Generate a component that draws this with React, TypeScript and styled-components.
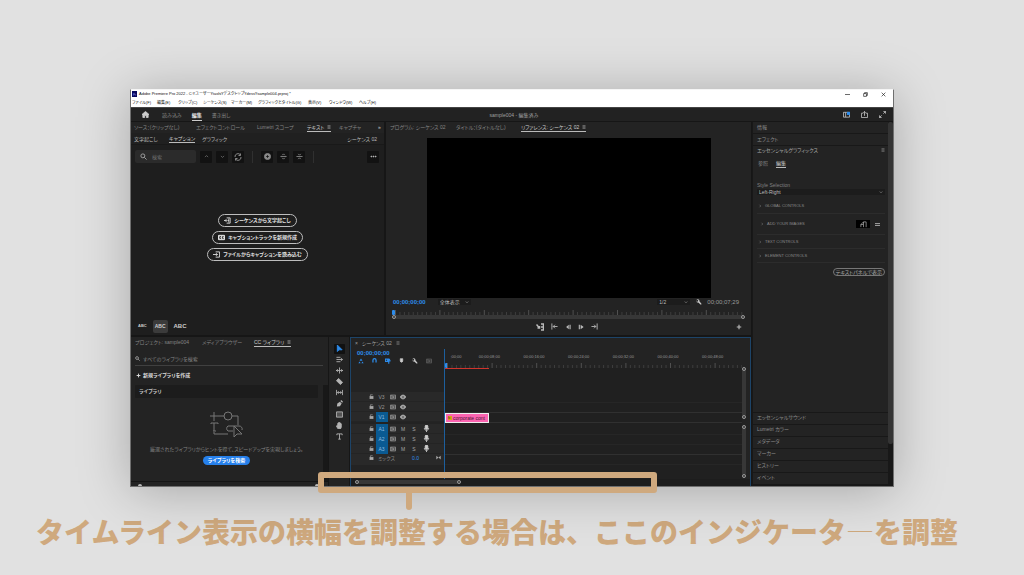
import React from "react";
import styled, { createGlobalStyle, css } from "styled-components";

const GlobalStyle = createGlobalStyle`
  *, *::before, *::after { box-sizing: border-box; }
  body { margin: 0; background: #e1e1e1; }
  button, input, select { font: inherit; color: inherit; margin: 0; padding: 0; border: 0; background: none; }
  button { white-space: nowrap; text-align: left; cursor: pointer; }
`;

const BLUE = "#2d8ceb";
const TAN = "#cfa97e";

const Page = styled.main`
  padding: 89px 130px 0;
  min-height: 100vh;
  overflow: hidden;
  background: #e1e1e1;
  font-family: "Liberation Sans", "Noto Sans CJK JP", sans-serif;
`;

const Stage = styled.div`
  position: relative;
`;

const AppWindow = styled.div`
  overflow: hidden;
  background: #161616;
  border: 1px solid #6f6f6f;
  border-top-color: #f5f5f5;
  color: #a0a0a0;
  font-size: 5px;
  line-height: 8px;
  font-feature-settings: "palt";
  white-space: nowrap;
  box-shadow: 0 4px 48px rgba(0, 0, 0, 0.26);
`;

const Row = styled.div<{ $gap?: number }>`
  display: flex;
  align-items: center;
  gap: ${(p) => p.$gap ?? 0}px;
`;

const Spacer = styled.div`
  flex: 1;
`;

/* ---------- icons ---------- */

const glyphs: Record<string, React.ReactNode> = {
  home: <path d="M8 1 0 8h2v7h4v-5h4v5h4V8h2z" fill="currentColor" />,
  search: <path d="M6.500 2a4.500 4.500 0 1 0 0 9 4.500 4.500 0 0 0 0-9zM10 10l5 5" />,
  up: <path d="m3 10 5-5 5 5" />,
  down: <path d="m3 6 5 5 5-5" />,
  right: <path d="m6 3 5 5-5 5" />,
  refresh: <path d="M2 8a6 6 0 0 1 11-4M14 8a6 6 0 0 1-11 4M13 1v4H9M3 15v-4h4" />,
  plusCircle: <><circle cx="8" cy="8" r="7" fill="currentColor" /><path d="M8 5v6M5 8h6" stroke="#141414" /></>,
  split: <path d="M1 8h14M5 5l3-3 3 3M5 11l3 3 3-3" />,
  merge: <path d="M1 8h14M5 2l3 3 3-3M5 14l3-3 3 3" />,
  dots: <><circle cx="3" cy="8" r="1" fill="currentColor" /><circle cx="8" cy="8" r="1" fill="currentColor" /><circle cx="13" cy="8" r="1" fill="currentColor" /></>,
  menu: <path d="M2 3h12M2 8h12M2 13h12" />,
  stripes: <path d="M0 5h16M0 11h16" strokeWidth="3" />,
  routes: <path d="M2 14V8h6V2h6M8 8v6M14 2v12M2 8l6-6" strokeWidth="1.5" />,
  script: <path d="M6 2h8v12H6M9 5h3M9 8h3M9 11h3M0 8h6M4 5l3 3-3 3" />,
  cc: <><rect x="0" y="3" width="16" height="10" rx="2" fill="currentColor" /><path d="M7 6H4v4h3M13 6h-3v4h3" stroke="#1e1e1e" /></>,
  importIn: <path d="M6 2h9v12H6M0 8h10M7 5l3 3-3 3" />,
  workspace: <><path d="M1 3h14v11H1zM6 3v11" /><rect x="9" y="2" width="7" height="7" fill={BLUE} stroke="none" /></>,
  share: <path d="M5 5H1v10h14V5h-4M8 11V1M5 4l3-3 3 3" />,
  expand: <path d="M10 1h5v5M15 1l-5 5M1 10v5h5M1 15l5-5" />,
  minimise: <path d="M0 8h16" />,
  restore: <path d="M2 5h9v9H2zM5 5V2h9v9h-3" />,
  close: <path d="m2 2 12 12M14 2 2 14" />,
  wrench: <path d="M1 4a4 4 0 0 1 7-2 4 4 0 0 1 1 4l6 7-2 2-7-6a4 4 0 0 1-5-3l3 1 2-2-1-3z" fill="currentColor" stroke="none" />,
  plus: <path d="M8 2v12M2 8h12" strokeWidth="3" />,
  markIn: <path d="M2 1v14M15 8H5M9 4 5 8l4 4" />,
  markOut: <path d="M14 1v14M1 8h10M7 4l4 4-4 4" />,
  back: <path d="M10 2v12L3 8zM12 2h3v12h-3z" fill="currentColor" stroke="none" />,
  play: <path d="M2 2h3v12H2zM7 2l8 6-8 6z" fill="currentColor" stroke="none" />,
  gang: <path d="M1 3 7 10M3 10h4V6M10 2h5v12h-5M10 8h5" strokeWidth="3" />,
  pointer: <path d="M3 0v15l4-4h7z" fill="currentColor" />,
  trackSelect: <path d="M1 3h9M1 13h9M1 8h13M11 5l4 3-4 3" />,
  ripple: <path d="M8 1v14M0 8h16M4 5 1 8l3 3M12 5l3 3-3 3" strokeWidth="2" />,
  razor: <path d="m6 1 9 9-5 5-9-9z" fill="currentColor" />,
  slip: <path d="M1 2v12M15 2v12M3 8h10M6 5 3 8l3 3M10 5l3 3-3 3" />,
  pen: <path d="M2 15 3 8l6-4 4 4-4 6zM10 2l2-2 4 4-2 2z" fill="currentColor" stroke="none" />,
  box: <path d="M1 2h14v12H1z" fill="#555" />,
  hand: <path d="M4 15 1 9l2-1 1 2V3h2v4-6h2v6-5h2v5-3h2v8l-2 4z" fill="currentColor" />,
  type: <path d="M2 5V2h12v3M8 2v12M5 14h6" strokeWidth="2" />,
  nest: <path d="M8 1 4 7h8zM1 14l3-5 3 5zM9 14l3-5 3 5z" fill="currentColor" stroke="none" />,
  magnet: <path d="M3 14V7a5 5 0 0 1 10 0v7" strokeWidth="4" />,
  link: <path d="M1 3h6v6H1zM10 1v14M13 3l-3 3 5 2" strokeWidth="3" />,
  marker: <path d="M4 2h8v8l-4 4-4-4z" fill="currentColor" />,
  lock: <><rect x="3" y="7" width="10" height="8" fill="currentColor" /><path d="M5 7V4a3 3 0 0 1 6-1" /></>,
  film: <path d="M1 3h14v10H1zM5 3v10M5 8h10M9 6v5" strokeWidth="2" />,
  eye: <><path d="M0 8c4-7 12-7 16 0-4 7-12 7-16 0z" fill="currentColor" /><circle cx="8" cy="8" r="3" fill="#222" /></>,
  mic: <><rect x="5" y="0" width="6" height="10" rx="3" fill="currentColor" /><path d="M3 7c0 7 10 7 10 0M8 12v4" /></>,
  ends: <path d="M1 2v12l7-6zM15 2v12L8 8z" fill="currentColor" stroke="none" />,
};

const Svg = styled.svg`
  flex: none;
  display: block;
`;

function Icon({ name, size = 7, color = "currentColor" }: { name: string; size?: number; color?: string }) {
  return (
    <Svg width={size} height={size} viewBox="0 0 16 16" fill="none" stroke="currentColor" strokeWidth="2" color={color === "currentColor" ? undefined : color} aria-hidden="true">
      {glyphs[name]}
    </Svg>
  );
}

/* ---------- title, menu and header ---------- */

const TitleBar = styled.header`
  display: flex;
  align-items: center;
  height: 8px;
  padding: 0 1px;
  background: #fff;
  color: #111;
  font-size: 4px;
`;

const Logo = styled.span`
  display: grid;
  place-items: center;
  width: 5px;
  height: 6px;
  margin-right: 2px;
  background: #08085c;
  color: #99f;
  font-size: 3px;
`;

const WindowButton = styled.button`
  width: 18px;
  display: grid;
  justify-items: center;
`;

const MenuBar = styled.nav`
  display: flex;
  align-items: center;
  height: 9px;
  padding-left: 1px;
  background: #fff;
  color: #111;
  font-size: 4px;
`;

const MenuItem = styled.button<{ $w: number }>`
  flex: 0 0 ${(p) => p.$w}px;
`;

const WorkHeader = styled.div`
  display: grid;
  grid-template-columns: 1fr auto 1fr;
  align-items: center;
  height: 14px;
  padding: 0 7px 0 11px;
  background: #222;
  border-top: 1px solid #444;
`;

const HeaderTools = styled(Row)`
  justify-content: flex-end;
  color: #bbb;
`;

const HeaderTab = styled.button<{ $on?: boolean }>`
  height: 13px;
  padding: 1px 0 0;
  color: ${(p) => (p.$on ? "#e8e8e8" : "#8a8a8a")};
  font-weight: ${(p) => (p.$on ? 700 : 400)};
  border-bottom: 1px solid ${(p) => (p.$on ? "#ccc" : "transparent")};
`;

/* ---------- panels ---------- */

const Body = styled.div`
  display: grid;
  grid-template-columns: 1fr 141px;
  gap: 1px;
  padding-top: 1px;
`;

const TopPanels = styled.div`
  display: grid;
  grid-template-columns: 253px 1fr;
  gap: 2px;
`;

const BottomPanels = styled.div`
  display: grid;
  grid-template-columns: 197px 20px 1fr;
  gap: 1px;
  margin-top: 2px;
`;

const Panel = styled.section`
  display: flex;
  flex-direction: column;
  min-width: 0;
  background: #232323;
`;

const TabBar = styled.div<{ $left?: number }>`
  display: flex;
  align-items: center;
  height: 11px;
  padding-left: ${(p) => p.$left ?? 3}px;
`;

const TabCell = styled.div<{ $w: number }>`
  flex: 0 0 ${(p) => p.$w}px;
`;

const Tab = styled.button<{ $on?: boolean; $bright?: boolean }>`
  display: inline-flex;
  align-items: center;
  gap: 3px;
  height: 9px;
  line-height: 8px;
  color: ${(p) => (p.$on || p.$bright ? "#ccc" : "#858585")};
  border-bottom: 1px solid ${(p) => (p.$on ? "#bbb" : "transparent")};
`;

const CaptionBody = styled.div`
  display: flex;
  flex-direction: column;
  flex: 1;
  background: #1e1e1e;
`;

const SubTabs = styled(TabBar)`
  height: 12px;
  padding-right: 7px;
  border-bottom: 1px solid #191919;
  background: #202020;
  color: #bbb;
`;

const Tools = styled.div`
  display: flex;
  align-items: center;
  gap: 4px;
  padding: 5px 5px 0 4px;
`;

const SearchBox = styled.label`
  display: flex;
  align-items: center;
  gap: 5px;
  width: 61px;
  height: 13px;
  padding: 0 5px;
  border-radius: 2px;
  background: #2b2b2b;
  input { width: 40px; height: 9px; outline: 0; }
  input::placeholder { color: #707070; }
`;

const ToolButton = styled.button`
  display: grid;
  place-items: center;
  width: 12px;
  height: 12px;
  border-radius: 1px;
  background: #121212;
  color: #888;
`;

const Divider = styled.span`
  width: 1px;
  height: 12px;
  margin: 0 4px;
  background: #303030;
`;

const Actions = styled.div`
  display: flex;
  flex: 1;
  flex-direction: column;
  align-items: center;
  justify-content: center;
  gap: 4px;
  padding-bottom: 8px;
`;

const Pill = styled.button`
  display: flex;
  align-items: center;
  gap: 3px;
  height: 13px;
  padding: 0 5px;
  border: 1px solid #bdbdbd;
  border-radius: 7px;
  color: #e4e4e4;
  font-weight: 600;
`;

const Sizes = styled.div`
  display: flex;
  align-items: center;
  gap: 6px;
  padding: 0 7px 2px;
  color: #ccc;
`;

const SizeButton = styled.button<{ $size: number; $on?: boolean }>`
  height: 13px;
  min-width: 8px;
  padding: ${(p) => (p.$on ? "0 2px" : "0")};
  background: ${(p) => (p.$on ? "#3b3b3b" : "transparent")};
  border-radius: 2px;
  font-size: ${(p) => p.$size}px;
  font-weight: 600;
`;

/* ---------- program monitor ---------- */

const Video = styled.div`
  align-self: center;
  width: calc(100% - 81px);
  aspect-ratio: 16 / 9;
  margin-top: 5px;
  background: #000;
`;

const MonitorInfo = styled.div`
  display: flex;
  align-items: center;
  gap: 12px;
  height: 9px;
  padding: 0 12px 0 7px;
`;

const Timecode = styled.span<{ $plain?: boolean }>`
  color: ${(p) => (p.$plain ? "#999" : BLUE)};
  font-size: 6px;
  font-weight: ${(p) => (p.$plain ? 400 : 600)};
`;

const SmallSelect = styled.div`
  display: flex;
  align-items: center;
  justify-content: space-between;
  width: 33px;
  height: 6px;
  padding: 0 2px;
  background: #1c1c1c;
  color: #bbb;
  select { appearance: none; flex: 1; min-width: 0; height: 6px; line-height: 6px; outline: 0; font-size: 5px; }
`;

const Scrubber = styled.div`
  padding: 3px 6px 0;
`;

const ScrollBar = styled.div<{ $vertical?: boolean }>`
  display: flex;
  flex-direction: ${(p) => (p.$vertical ? "column" : "row")};
  align-items: center;
  justify-content: space-between;
  border-radius: 2px;
  background: #373737;
  ${(p) => (p.$vertical ? css`width: 4px; flex: 1;` : css`height: 4px;`)}
`;

const Knob = styled.span`
  width: 4px;
  height: 4px;
  border: 1px solid #999;
  border-radius: 50%;
  background: #333;
`;

const Transport = styled.div`
  display: grid;
  grid-template-columns: 1fr auto 1fr;
  align-items: center;
  padding: 4px 9px;
  color: #bbb;
  button { display: block; }
  & > :last-child { justify-self: end; }
`;

const TransportButtons = styled(Row)`
  margin-right: 4px;
`;

const RulerSvg = styled.svg`
  display: block;
  width: 100%;
`;

function Ruler({ span, step, height = 5 }: { span: number; step: number; height?: number }) {
  const count = Math.floor(span / step);
  return (
    <RulerSvg height={height} viewBox={`0 0 ${span} ${height}`} preserveAspectRatio="none" aria-hidden="true">
      {Array.from({ length: count + 1 }, (_, i) => (
        <path key={i} d={`M${i * step + 0.5} ${i % 10 === 0 ? 0 : height - 3}V${height}`} stroke={i % 10 === 0 ? "#505050" : "#3e3e3e"} />
      ))}
    </RulerSvg>
  );
}

const PlayHead = styled.span`
  display: block;
  width: 3px;
  height: 5px;
  border-radius: 1px;
  background: ${BLUE};
`;

const ScrubRow = styled.div`
  display: grid;
  grid-template-columns: 3px 1fr;
  align-items: end;
`;

/* ---------- library ---------- */

const LibrarySearch = styled.label`
  display: flex;
  align-items: center;
  gap: 3px;
  height: 13px;
  margin: 5px 5px 0 4px;
  border-bottom: 1px solid #404040;
  input { flex: 1; height: 9px; outline: 0; }
  input::placeholder { color: #858585; opacity: 1; }
`;

const Create = styled.button`
  display: flex;
  align-items: center;
  gap: 2px;
  height: 19px;
  padding: 0 5px;
  color: #ddd;
  font-weight: 600;
`;

const LibraryArea = styled.div`
  display: grid;
  grid-template-columns: 1fr 5px;
  gap: 5px;
  height: 96px;
  padding-left: 4px;
`;

const LibraryContent = styled.div`
  display: flex;
  flex-direction: column;
  align-items: center;
`;

const LibraryName = styled.h2`
  align-self: stretch;
  margin: 0 0 13px;
  padding: 2px 4px 3px;
  border-radius: 1px;
  background: #1c1c1c;
  color: #c4c4c4;
  font-size: 5px;
  font-weight: 600;
`;

const Hint = styled.p`
  margin: 6px 0 3px;
  color: #848484;
`;

const BrowseButton = styled.button`
  height: 9px;
  padding: 0 5px;
  border-radius: 5px;
  background: #2680eb;
  color: #fff;
  font-weight: 700;
  line-height: 9px;
`;

const Track = styled.div`
  background: #181818;
`;

const LibraryFoot = styled.div`
  display: flex;
  align-items: end;
  justify-content: space-between;
  flex: 1;
  padding: 0 9px 0 7px;
  border-top: 1px solid #151515;
  span { width: 4px; height: 2px; border-radius: 2px 2px 0 0; background: #bbb; }
`;

/* ---------- tool strip ---------- */

const ToolStrip = styled(Panel)`
  align-items: center;
  gap: 1px;
  padding-top: 7px;
  color: #b5b5b5;
`;

const StripButton = styled.button<{ $on?: boolean }>`
  display: grid;
  place-items: center;
  width: 11px;
  height: 10px;
  border-radius: 1px;
  background: ${(p) => (p.$on ? "#111" : "transparent")};
  color: ${(p) => (p.$on ? BLUE : "inherit")};
`;

/* ---------- timeline ---------- */

const Timeline = styled(Panel)`
  height: 149px;
  border: 1px solid #1d4468;
  border-bottom: 0;
`;

const TimelineGrid = styled.div`
  display: grid;
  grid-template-columns: 93px 1fr 8px;
  flex: 1;
`;

const Side = styled.div`
  display: flex;
  flex-direction: column;
  padding-bottom: 14px;
  background: #232323;
`;

const SideTime = styled.div`
  padding-left: 6px;
`;

const Options = styled(Row)`
  height: 8px;
  padding-left: 7px;
  color: ${BLUE};
`;

const TrackHead = styled.div<{ $after?: number }>`
  display: grid;
  grid-template-columns: 7px 13px 10px 10px 12px 12px;
  align-items: center;
  justify-items: center;
  height: 10px;
  margin-bottom: ${(p) => p.$after ?? 0}px;
  padding-left: 17px;
  background: #292929;
  color: #a5a5a5;
  border-bottom: 1px solid #242424;
`;

const TrackName = styled.button<{ $on?: boolean }>`
  width: 12px;
  height: 10px;
  text-align: center;
  background: ${(p) => (p.$on ? "#0a5a92" : "transparent")};
  color: ${(p) => (p.$on ? "#8cbbe0" : "#999")};
`;

const MixHead = styled(Row)`
  height: 11px;
  padding: 0 3px 3px 18px;
  background: #292929;
  color: #888;
`;

const Level = styled.span`
  color: ${BLUE};
`;

const Lanes = styled.div`
  display: flex;
  flex-direction: column;
  background: #202020;
  border-left: 1px solid #1d5f9d;
`;

const Labels = styled.div`
  display: grid;
  grid-template-columns: 22px repeat(6, 1fr) 7px;
  height: 14px;
  padding-top: 4px;
  background: #232323;
  color: #999;
  font-size: 4px;
  text-align: center;
`;

const RulerRow = styled.div`
  display: grid;
  grid-template-columns: 2px 1fr;
  background: #232323;
`;

const RenderBar = styled.div`
  width: 44px;
  height: 1px;
  margin-bottom: 24px;
  background: #d0342c;
`;

const Lane = styled.div<{ $after?: number; $strong?: boolean }>`
  height: 10px;
  margin-bottom: ${(p) => p.$after ?? 0}px;
  border-bottom: 1px solid ${(p) => (p.$strong ? "#303030" : "#262626")};
`;

const Clip = styled.div`
  display: flex;
  align-items: center;
  gap: 1px;
  width: 44px;
  height: 10px;
  padding-left: 2px;
  border: 1px solid #eee;
  background: #fb63b0;
  color: #4a1734;
  font-size: 5px;
  line-height: 8px;
`;

const Fx = styled.span`
  flex: none;
  width: 4px;
  height: 4px;
  background: #d9a514;
  font-size: 3px;
  line-height: 4px;
`;

const SideScroll = styled.div`
  display: flex;
  flex-direction: column;
  gap: 6px;
  padding: 18px 0 1px;
  background: #232323;
`;

const HorizontalScroll = styled.div`
  display: flex;
  align-items: center;
  height: 7px;
  padding-left: 4px;
  background: #1d1d1d;
  & > div { width: 106px; }
`;

/* ---------- right column ---------- */

const RightColumn = styled.aside`
  display: grid;
  grid-template-columns: 1fr 5px;
  background: #181818;
`;

const Stack = styled.div`
  display: flex;
  flex-direction: column;
  gap: 1px;
  padding: 0 0 2px 1px;
`;

const Collapsed = styled.button`
  height: 11px;
  padding: 0 0 2px 4px;
  background: #232323;
  color: #8e8e8e;
`;

const Graphics = styled(Panel)`
  flex: 1;
  padding: 0 3px 0 4px;
`;

const GraphicsTitle = styled(Row)`
  height: 8px;
  justify-content: space-between;
  color: #aaa;
`;

const GraphicsTabs = styled(TabBar)`
  height: 19px;
`;

const Group = styled.button<{ $h: number; $indent?: boolean }>`
  display: flex;
  align-items: center;
  gap: 3px;
  height: ${(p) => p.$h}px;
  padding: 0 5px 0 ${(p) => (p.$indent ? 3 : 1)}px;
  border-bottom: 1px solid #2c2c2c;
  color: #8a8a8a;
  font-size: 4px;
`;

const Thumb = styled.span`
  display: grid;
  place-items: center;
  width: 14px;
  height: 8px;
  margin-right: 2px;
  background: #000;
`;

const ShowText = styled.button`
  align-self: flex-end;
  height: 8px;
  margin-top: 5px;
  padding: 0 2px;
  border: 1px solid #777;
  border-radius: 4px;
  color: #aaa;
  line-height: 6px;
`;

const FieldLabel = styled.label`
  margin-top: 8px;
  color: #808080;
`;

const StyleSelect = styled(SmallSelect)`
  width: auto;
  margin-bottom: 4px;
`;

const RightTrack = styled.div`
  margin-bottom: 42px;
  border-radius: 2px;
  background: #343434;
`;

/* ---------- annotation ---------- */

const Highlight = styled.div`
  position: absolute;
  left: 188px;
  bottom: -6px;
  width: 339px;
  height: 21px;
  border: 6px solid ${TAN};
  border-radius: 3px;
  &::after {
    content: "";
    position: absolute;
    left: 82px;
    top: 12px;
    width: 6px;
    height: 20px;
    border-radius: 0 0 3px 3px;
    background: ${TAN};
  }
`;

const Caption = styled.p`
  display: flex;
  justify-content: center;
  margin: 24px -130px 0;
  padding-right: 30px;
  color: ${TAN};
  font-family: "Noto Sans CJK JP", sans-serif;
  font-size: 28px;
  font-weight: 900;
  line-height: 40px;
  white-space: nowrap;
  span { font-weight: 100; }
`;

const menus: [string, number][] = [
  ["ファイル(F)", 25], ["編集(E)", 21], ["クリップ(C)", 25], ["シーケンス(S)", 28], ["マーカー(M)", 27],
  ["グラフィックとタイトル(G)", 50], ["表示(V)", 21], ["ウィンドウ(W)", 30], ["ヘルプ(H)", 22],
];

const videoTracks = ["V3", "V2", "V1"];
const audioTracks = ["A1", "A2", "A3"];
const times = ["00;00;08;00", "00;00;16;00", "00;00;24;00", "00;00;32;00", "00;00;40;00", "00;00;48;00"];
const tools = ["pointer", "trackSelect", "ripple", "razor", "slip", "pen", "box", "hand", "type"];
const collapsed = ["エッセンシャルサウンド", "Lumetri カラー", "メタデータ", "マーカー", "ヒストリー", "イベント"];

function CaptionPanel() {
  return (
    <Panel>
      <TabBar>
        <TabCell $w={62}><Tab>ソース：(クリップなし)</Tab></TabCell>
        <TabCell $w={61}><Tab>エフェクトコントロール</Tab></TabCell>
        <TabCell $w={50}><Tab>Lumetri スコープ</Tab></TabCell>
        <TabCell $w={32}><Tab $on>テキスト<Icon name="menu" size={4} /></Tab></TabCell>
        <TabCell $w={39}><Tab>キャプチャ</Tab></TabCell>
        <Tab $bright aria-label="その他のパネル">»</Tab>
      </TabBar>
      <CaptionBody>
        <SubTabs>
          <TabCell $w={35}>文字起こし</TabCell>
          <TabCell $w={33}><Tab $on>キャプション</Tab></TabCell>
          <span>グラフィック</span>
          <Spacer />
          <span>シーケンス 02</span>
        </SubTabs>
        <Tools>
          <SearchBox><Icon name="search" size={7} color="#aaa" /><input aria-label="検索" placeholder="検索" /></SearchBox>
          {["up", "down", "refresh"].map((n) => <ToolButton key={n} aria-label={n}><Icon name={n} size={n === "refresh" ? 8 : 5} /></ToolButton>)}
          <Divider />
          {["plusCircle", "split", "merge"].map((n) => <ToolButton key={n} aria-label={n}><Icon name={n} /></ToolButton>)}
          <Divider />
          <Spacer />
          <ToolButton aria-label="メニュー"><Icon name="dots" color="#ccc" /></ToolButton>
        </Tools>
        <Actions>
          <Pill><Icon name="script" />シーケンスから文字起こし</Pill>
          <Pill><Icon name="cc" />キャプショントラックを新規作成</Pill>
          <Pill><Icon name="importIn" />ファイルからキャプションを読み込む</Pill>
        </Actions>
        <Sizes>
          <SizeButton $size={4}>ABC</SizeButton>
          <SizeButton $size={5} $on>ABC</SizeButton>
          <SizeButton $size={6}>ABC</SizeButton>
        </Sizes>
      </CaptionBody>
    </Panel>
  );
}

function Monitor() {
  return (
    <Panel>
      <TabBar $left={4}>
        <TabCell $w={66}><Tab>プログラム: シーケンス 02</Tab></TabCell>
        <TabCell $w={65}><Tab>タイトル：(タイトルなし)</Tab></TabCell>
        <Tab $on>リファレンス: シーケンス 02<Icon name="menu" size={4} /></Tab>
      </TabBar>
      <Video />
      <MonitorInfo>
        <Timecode>00;00;00;00</Timecode>
        <SmallSelect><select aria-label="ズームレベル"><option>全体表示</option></select><Icon name="down" size={4} /></SmallSelect>
        <Spacer />
        <Row $gap={6}>
          <SmallSelect><select aria-label="再生解像度"><option>1/2</option></select><Icon name="down" size={4} /></SmallSelect>
          <Row $gap={5}><Icon name="wrench" size={6} color="#ccc" /><Timecode $plain>00;00;07;29</Timecode></Row>
        </Row>
      </MonitorInfo>
      <Scrubber>
        <ScrubRow><PlayHead /><Ruler span={350} step={4.44} /></ScrubRow>
        <ScrollBar><Knob /><Knob /></ScrollBar>
      </Scrubber>
      <Transport>
        <span />
        <TransportButtons $gap={7}>
          <button aria-label="ギャング"><Icon name="gang" size={8} /></button>
          <button aria-label="インへ移動"><Icon name="markIn" /></button>
          <button aria-label="前のフレーム"><Icon name="back" size={6} /></button>
          <button aria-label="次のフレーム"><Icon name="play" size={6} /></button>
          <button aria-label="アウトへ移動"><Icon name="markOut" /></button>
        </TransportButtons>
        <button aria-label="ボタンエディター"><Icon name="plus" size={6} /></button>
      </Transport>
    </Panel>
  );
}

function Library() {
  return (
    <Panel>
      <TabBar $left={4}>
        <TabCell $w={67}><Tab>プロジェクト: sample004</Tab></TabCell>
        <TabCell $w={52}><Tab>メディアブラウザー</Tab></TabCell>
        <Tab $on>CC ライブラリ<Icon name="menu" size={4} /></Tab>
      </TabBar>
      <LibrarySearch><Icon name="search" size={5} color="#ccc" /><input aria-label="ライブラリを検索" placeholder="すべてのライブラリを検索" /></LibrarySearch>
      <Create><Icon name="plus" size={5} />新規ライブラリを作成</Create>
      <LibraryArea>
        <LibraryContent>
          <LibraryName>ライブラリ</LibraryName>
          <Svg width="35" height="28" viewBox="0 0 35 28" fill="none" stroke="#777" aria-hidden="true">
            <path d="M5 1v9M1 5h14M23 5h6v9M2 13v-1h7v1M5 12v8M4 20h3M5 21v2h14" />
            <circle cx="19" cy="5" r="4" />
            <path d="M24 20h-5a3 3 0 0 1 0-5h11a3 3 0 0 1 3 4M25 15v11l3-3h5z" />
          </Svg>
          <Hint>厳選されたライブラリからヒントを得て、スピードアップを実現しましょう。</Hint>
          <BrowseButton>ライブラリを検索</BrowseButton>
        </LibraryContent>
        <Track />
      </LibraryArea>
      <LibraryFoot><span /><span /></LibraryFoot>
    </Panel>
  );
}

function TimelinePanel() {
  return (
    <Timeline>
      <TabBar $left={4}>
        <Row $gap={4}><span>×</span><span>シーケンス 02</span><Icon name="menu" size={4} /></Row>
      </TabBar>
      <TimelineGrid>
        <Side>
          <SideTime><Timecode>00;00;00;00</Timecode></SideTime>
          <Options $gap={8}>
            <Icon name="nest" size={6} /><Icon name="magnet" size={5} /><Icon name="link" size={6} />
            <Icon name="marker" size={5} color="#ccc" /><Icon name="wrench" size={6} color="#ccc" /><Icon name="film" size={6} color="#666" />
          </Options>
          <Spacer />
          {videoTracks.map((t) => (
            <TrackHead key={t} $after={t === "V1" ? 2 : 0}>
              <Icon name="lock" size={5} /><TrackName $on={t === "V1"}>{t}</TrackName><Icon name="film" size={6} /><Icon name="eye" size={6} />
            </TrackHead>
          ))}
          {audioTracks.map((t) => (
            <TrackHead key={t}>
              <Icon name="lock" size={5} /><TrackName $on>{t}</TrackName><Icon name="film" size={6} /><span>M</span><span>S</span><Icon name="mic" size={7} color="#ccc" />
            </TrackHead>
          ))}
          <MixHead $gap={4}>
            <Icon name="lock" size={5} color="#aaa" /><span>ミックス</span><Spacer /><Level>0.0</Level><Spacer /><Icon name="ends" size={5} color="#aaa" />
          </MixHead>
        </Side>
        <Lanes>
          <Labels><span>;00;00</span>{times.map((t) => <span key={t}>{t}</span>)}</Labels>
          <RulerRow><PlayHead /><Ruler span={295} step={4.46} /></RulerRow>
          <RenderBar />
          <Lane /><Lane $strong /><Lane $after={2} $strong><Clip><Fx>fx</Fx>corporate cont</Clip></Lane>
          <Lane /><Lane /><Lane $strong /><Lane />
        </Lanes>
        <SideScroll>
          <ScrollBar $vertical><Knob /><Knob /></ScrollBar>
          <ScrollBar $vertical><Knob /><Knob /></ScrollBar>
        </SideScroll>
      </TimelineGrid>
      <HorizontalScroll><ScrollBar><Knob /><Knob /></ScrollBar></HorizontalScroll>
    </Timeline>
  );
}

function RightPanels() {
  return (
    <RightColumn>
      <Stack>
        <Collapsed>情報</Collapsed>
        <Collapsed>エフェクト</Collapsed>
        <Graphics>
          <GraphicsTitle><span>エッセンシャルグラフィックス</span><Icon name="menu" size={4} /></GraphicsTitle>
          <GraphicsTabs $left={1}>
            <TabCell $w={18}><Tab>参照</Tab></TabCell>
            <Tab $on>編集</Tab>
          </GraphicsTabs>
          <FieldLabel htmlFor="style-selection">Style Selection</FieldLabel>
          <StyleSelect><select id="style-selection"><option>Left-Right</option></select><Icon name="down" size={4} /></StyleSelect>
          <Group $h={15}><Icon name="right" size={4} />GLOBAL CONTROLS</Group>
          <Group $h={21} $indent><Icon name="right" size={4} />ADD YOUR IMAGES<Spacer /><Thumb><Icon name="routes" size={7} color="#bbb" /></Thumb><Icon name="stripes" size={5} color="#aaa" /></Group>
          <Group $h={14}><Icon name="right" size={4} />TEXT CONTROLS</Group>
          <Group $h={14}><Icon name="right" size={4} />ELEMENT CONTROLS</Group>
          <ShowText>テキストパネルで表示</ShowText>
        </Graphics>
        {collapsed.map((c) => <Collapsed key={c}>{c}</Collapsed>)}
      </Stack>
      <RightTrack />
    </RightColumn>
  );
}

export default function App() {
  return (
    <Page>
      <GlobalStyle />
      <Stage>
        <AppWindow>
          <TitleBar>
            <Logo>Pr</Logo>
            <span>Adobe Premiere Pro 2022 - C:¥ユーザー¥tashi¥デスクトップ¥dess¥sample004.prproj *</span>
            <Spacer />
            {["minimise", "restore", "close"].map((n) => <WindowButton key={n} aria-label={n}><Icon name={n} size={5} /></WindowButton>)}
          </TitleBar>
          <MenuBar>{menus.map(([m, w]) => <MenuItem key={m} $w={w}>{m}</MenuItem>)}</MenuBar>
          <WorkHeader>
            <Row $gap={10}>
              <Row $gap={13}><Icon name="home" size={7} color="#ccc" /><HeaderTab>読み込み</HeaderTab></Row>
              <HeaderTab $on>編集</HeaderTab>
              <HeaderTab>書き出し</HeaderTab>
            </Row>
            <span>sample004 - 編集済み</span>
            <HeaderTools $gap={11}>
              <Icon name="workspace" /><Icon name="share" /><Icon name="expand" />
            </HeaderTools>
          </WorkHeader>
          <Body>
            <div>
              <TopPanels><CaptionPanel /><Monitor /></TopPanels>
              <BottomPanels>
                <Library />
                <ToolStrip>
                  {tools.map((t, i) => <StripButton key={t} $on={i === 0} aria-label={t}><Icon name={t} size={7} /></StripButton>)}
                </ToolStrip>
                <TimelinePanel />
              </BottomPanels>
            </div>
            <RightPanels />
          </Body>
        </AppWindow>
        <Highlight />
      </Stage>
      <Caption>タイムライン表示の横幅を調整する場合は、ここのインジケータ<span>―</span>を調整</Caption>
    </Page>
  );
}
